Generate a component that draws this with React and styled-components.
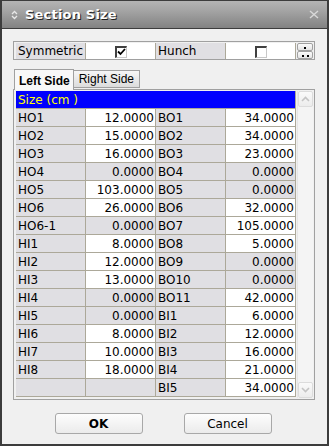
import React from "react";
import styled, { createGlobalStyle } from "styled-components";

const GlobalStyle = createGlobalStyle`
  html, body { margin: 0; padding: 0; background: #f0f0f0; }
  * { box-sizing: border-box; }
`;

const rows = [
  ["HO1", "12.0000", "BO1", "34.0000"],
  ["HO2", "15.0000", "BO2", "34.0000"],
  ["HO3", "16.0000", "BO3", "23.0000"],
  ["HO4", "0.0000", "BO4", "0.0000"],
  ["HO5", "103.0000", "BO5", "0.0000"],
  ["HO6", "26.0000", "BO6", "32.0000"],
  ["HO6-1", "0.0000", "BO7", "105.0000"],
  ["HI1", "8.0000", "BO8", "5.0000"],
  ["HI2", "12.0000", "BO9", "0.0000"],
  ["HI3", "13.0000", "BO10", "0.0000"],
  ["HI4", "0.0000", "BO11", "42.0000"],
  ["HI5", "0.0000", "BI1", "6.0000"],
  ["HI6", "8.0000", "BI2", "12.0000"],
  ["HI7", "10.0000", "BI3", "16.0000"],
  ["HI8", "18.0000", "BI4", "21.0000"],
  ["", "", "BI5", "34.0000"],
];

const Window = styled.div`
  width: 329px;
  height: 446px;
  background: #f0f0f0;
  border: 2px solid #3c3c3c;
  border-top: 1px solid #3c3c3c;
  display: flex;
  flex-direction: column;
  font-family: "DejaVu Sans", "Liberation Sans", sans-serif;
  font-size: 12px;
  color: #000;
`;

const TitleBar = styled.div`
  height: 28px;
  background: linear-gradient(#b4b4b4, #a2a2a2 40%, #828282);
  border-bottom: 1px solid #3c3c3c;
  display: flex;
  align-items: center;
  padding: 0 8px 0 9px;
  gap: 7px;
`;

const Title = styled.div`
  flex: 1;
  color: #fff;
  font-weight: bold;
  font-size: 13px;
  text-shadow: 1px 1px 0 #202020;
  letter-spacing: 0.2px;
`;

const Body = styled.div`
  flex: 1;
  display: flex;
  flex-direction: column;
  padding: 12px 12px 0 11px;
`;

const OptionBox = styled.div`
  height: 19px;
  border: 1px solid #a0a0a0;
  padding: 1px 1px 0 2px;
  display: flex;
  gap: 1px;
`;

const OptionCells = styled.div`
  display: grid;
  grid-template-columns: repeat(4, 69px);
  gap: 1px;
  background: #aca899;
  border-right: 1px solid #aca899;
  height: 16px;
`;

const Cell = styled.div`
  background: ${(p) => (p.$gray ? "#e0dfe3" : "#fff")};
  display: flex;
  align-items: center;
  justify-content: ${(p) => (p.$align === "right" ? "flex-end" : p.$align === "center" ? "center" : "flex-start")};
  padding: 0 1px 0 2px;
  white-space: nowrap;
  overflow: hidden;
  font-size: 12px;
  line-height: 1;
`;

const Check = styled.div`
  width: 12px;
  height: 12px;
  background: #fff;
  border-top: 2px solid #404040;
  border-left: 2px solid #404040;
  border-right: 1px solid #c8c8c8;
  border-bottom: 1px solid #c8c8c8;
  display: flex;
  align-items: center;
  justify-content: center;
  margin-top: 1px;
`;

const SpinColumn = styled.div`
  width: 16px;
  display: flex;
  flex-direction: column;
`;

const SpinButton = styled.div`
  flex: 1;
  border: 1px solid #a0a0a0;
  border-radius: 2px;
  background: linear-gradient(#fbfbfb, #e4e4e4);
  display: flex;
  align-items: center;
  justify-content: center;
  gap: 3px;
  &::before, &::after {
    content: "";
    width: 2px;
    height: 2px;
    background: #000;
    margin-top: 2px;
  }
  &:first-child::after { display: none; }
`;

const TabRow = styled.div`
  display: flex;
  align-items: flex-end;
  margin-top: 9px;
  height: 20px;
  padding-left: 1px;
  position: relative;
  z-index: 1;
`;

const Tab = styled.div`
  height: ${(p) => (p.$active ? "21px" : "18px")};
  margin-bottom: ${(p) => (p.$active ? "-1px" : "1px")};
  padding: ${(p) => (p.$active ? "2px 3px 0 4px" : "0 5px 0 5px")};
  border: 1px solid #a0a0a0;
  border-bottom: ${(p) => (p.$active ? "none" : "1px solid #a0a0a0")};
  border-left: ${(p) => (p.$active ? "1px solid #a0a0a0" : "none")};
  background: ${(p) => (p.$active ? "#f8f8f8" : "linear-gradient(#f6f6f6, #dcdcdc)")};
  font-family: "Liberation Sans", Arial, sans-serif;
  font-weight: ${(p) => (p.$active ? "bold" : "normal")};
  font-size: 12px;
  display: flex;
  align-items: center;
  white-space: nowrap;
`;

const GridBox = styled.div`
  height: 311px;
  border: 1px solid #a0a0a0;
  padding: 1px 1px 1px 2px;
  display: flex;
  gap: 1px;
  background: #f0f0f0;
`;

const Table = styled.div`
  width: 280px;
  display: grid;
  grid-template-columns: repeat(4, 69px);
  grid-auto-rows: 17px;
  gap: 1px;
  background: #aca899;
  border-right: 1px solid #aca899;
  border-bottom: 1px solid #aca899;
  align-self: flex-start;
`;

const Header = styled.div`
  grid-column: 1 / -1;
  background: #0000ff;
  color: #ffff00;
  font-size: 12px;
  display: flex;
  align-items: center;
  padding-left: 2px;
`;

const ScrollBar = styled.div`
  width: 17px;
  display: flex;
  flex-direction: column;
  justify-content: space-between;
  background: #f4f4f4;
  border-left: 1px solid #e6e6e6;
`;

const ScrollButton = styled.div`
  height: 16px;
  border: 1px solid #dcdcdc;
  border-radius: 2px;
  background: linear-gradient(#fafafa, #ececec);
  display: flex;
  align-items: center;
  justify-content: center;
`;

const Footer = styled.div`
  display: flex;
  justify-content: center;
  gap: 41px;
  margin-top: 13px;
  padding-right: 2px;
`;

const Button = styled.div`
  width: 88px;
  height: 21px;
  border: 1px solid #a8a8a8;
  border-radius: 3px;
  background: linear-gradient(#fdfdfd, #ebebeb);
  display: flex;
  align-items: center;
  justify-content: center;
  font-size: 12px;
  font-weight: ${(p) => (p.$bold ? "bold" : "normal")};
`;

const Chevron = ({ up }) => (
  <svg width="9" height="6" viewBox="0 0 9 6">
    <path
      d={up ? "M1 5 L4.5 1.5 L8 5" : "M1 1 L4.5 4.5 L8 1"}
      fill="none"
      stroke="#c4c4c4"
      strokeWidth="1.6"
    />
  </svg>
);

const Tick = () => (
  <svg width="9" height="8" viewBox="0 0 9 8">
    <path d="M1 3.5 L3.5 6 L8 1" fill="none" stroke="#000" strokeWidth="1.8" />
  </svg>
);

const App = () => (
  <>
    <GlobalStyle />
    <Window>
      <TitleBar>
        <svg width="7" height="10" viewBox="0 0 7 10">
          <path d="M1 4 L3.5 1.5 L6 4 M1 6 L3.5 8.5 L6 6" fill="none" stroke="#e8e8e8" strokeWidth="1.3" />
        </svg>
        <Title>Section Size</Title>
        <svg width="10" height="9" viewBox="0 0 10 9">
          <path d="M1 1 L9 8 M9 1 L1 8" stroke="#d8d8d8" strokeWidth="1.4" />
        </svg>
      </TitleBar>
      <Body>
        <OptionBox>
          <OptionCells>
            <Cell $gray>Symmetric</Cell>
            <Cell $align="center">
              <Check>
                <Tick />
              </Check>
            </Cell>
            <Cell $gray>Hunch</Cell>
            <Cell $align="center">
              <Check />
            </Cell>
          </OptionCells>
          <SpinColumn>
            <SpinButton />
            <SpinButton />
          </SpinColumn>
        </OptionBox>
        <TabRow>
          <Tab $active>Left Side</Tab>
          <Tab>Right Side</Tab>
        </TabRow>
        <GridBox>
          <Table>
            <Header>Size (cm )</Header>
            {rows.map((r, i) => (
              <React.Fragment key={i}>
                <Cell $gray>{r[0]}</Cell>
                <Cell $align="right" $gray={r[1] === "" || r[1] === "0.0000"}>
                  {r[1]}
                </Cell>
                <Cell $gray>{r[2]}</Cell>
                <Cell $align="right" $gray={r[3] === "0.0000"}>
                  {r[3]}
                </Cell>
              </React.Fragment>
            ))}
          </Table>
          <ScrollBar>
            <ScrollButton>
              <Chevron up />
            </ScrollButton>
            <ScrollButton>
              <Chevron />
            </ScrollButton>
          </ScrollBar>
        </GridBox>
        <Footer>
          <Button $bold>OK</Button>
          <Button>Cancel</Button>
        </Footer>
      </Body>
    </Window>
  </>
);

export default App;
